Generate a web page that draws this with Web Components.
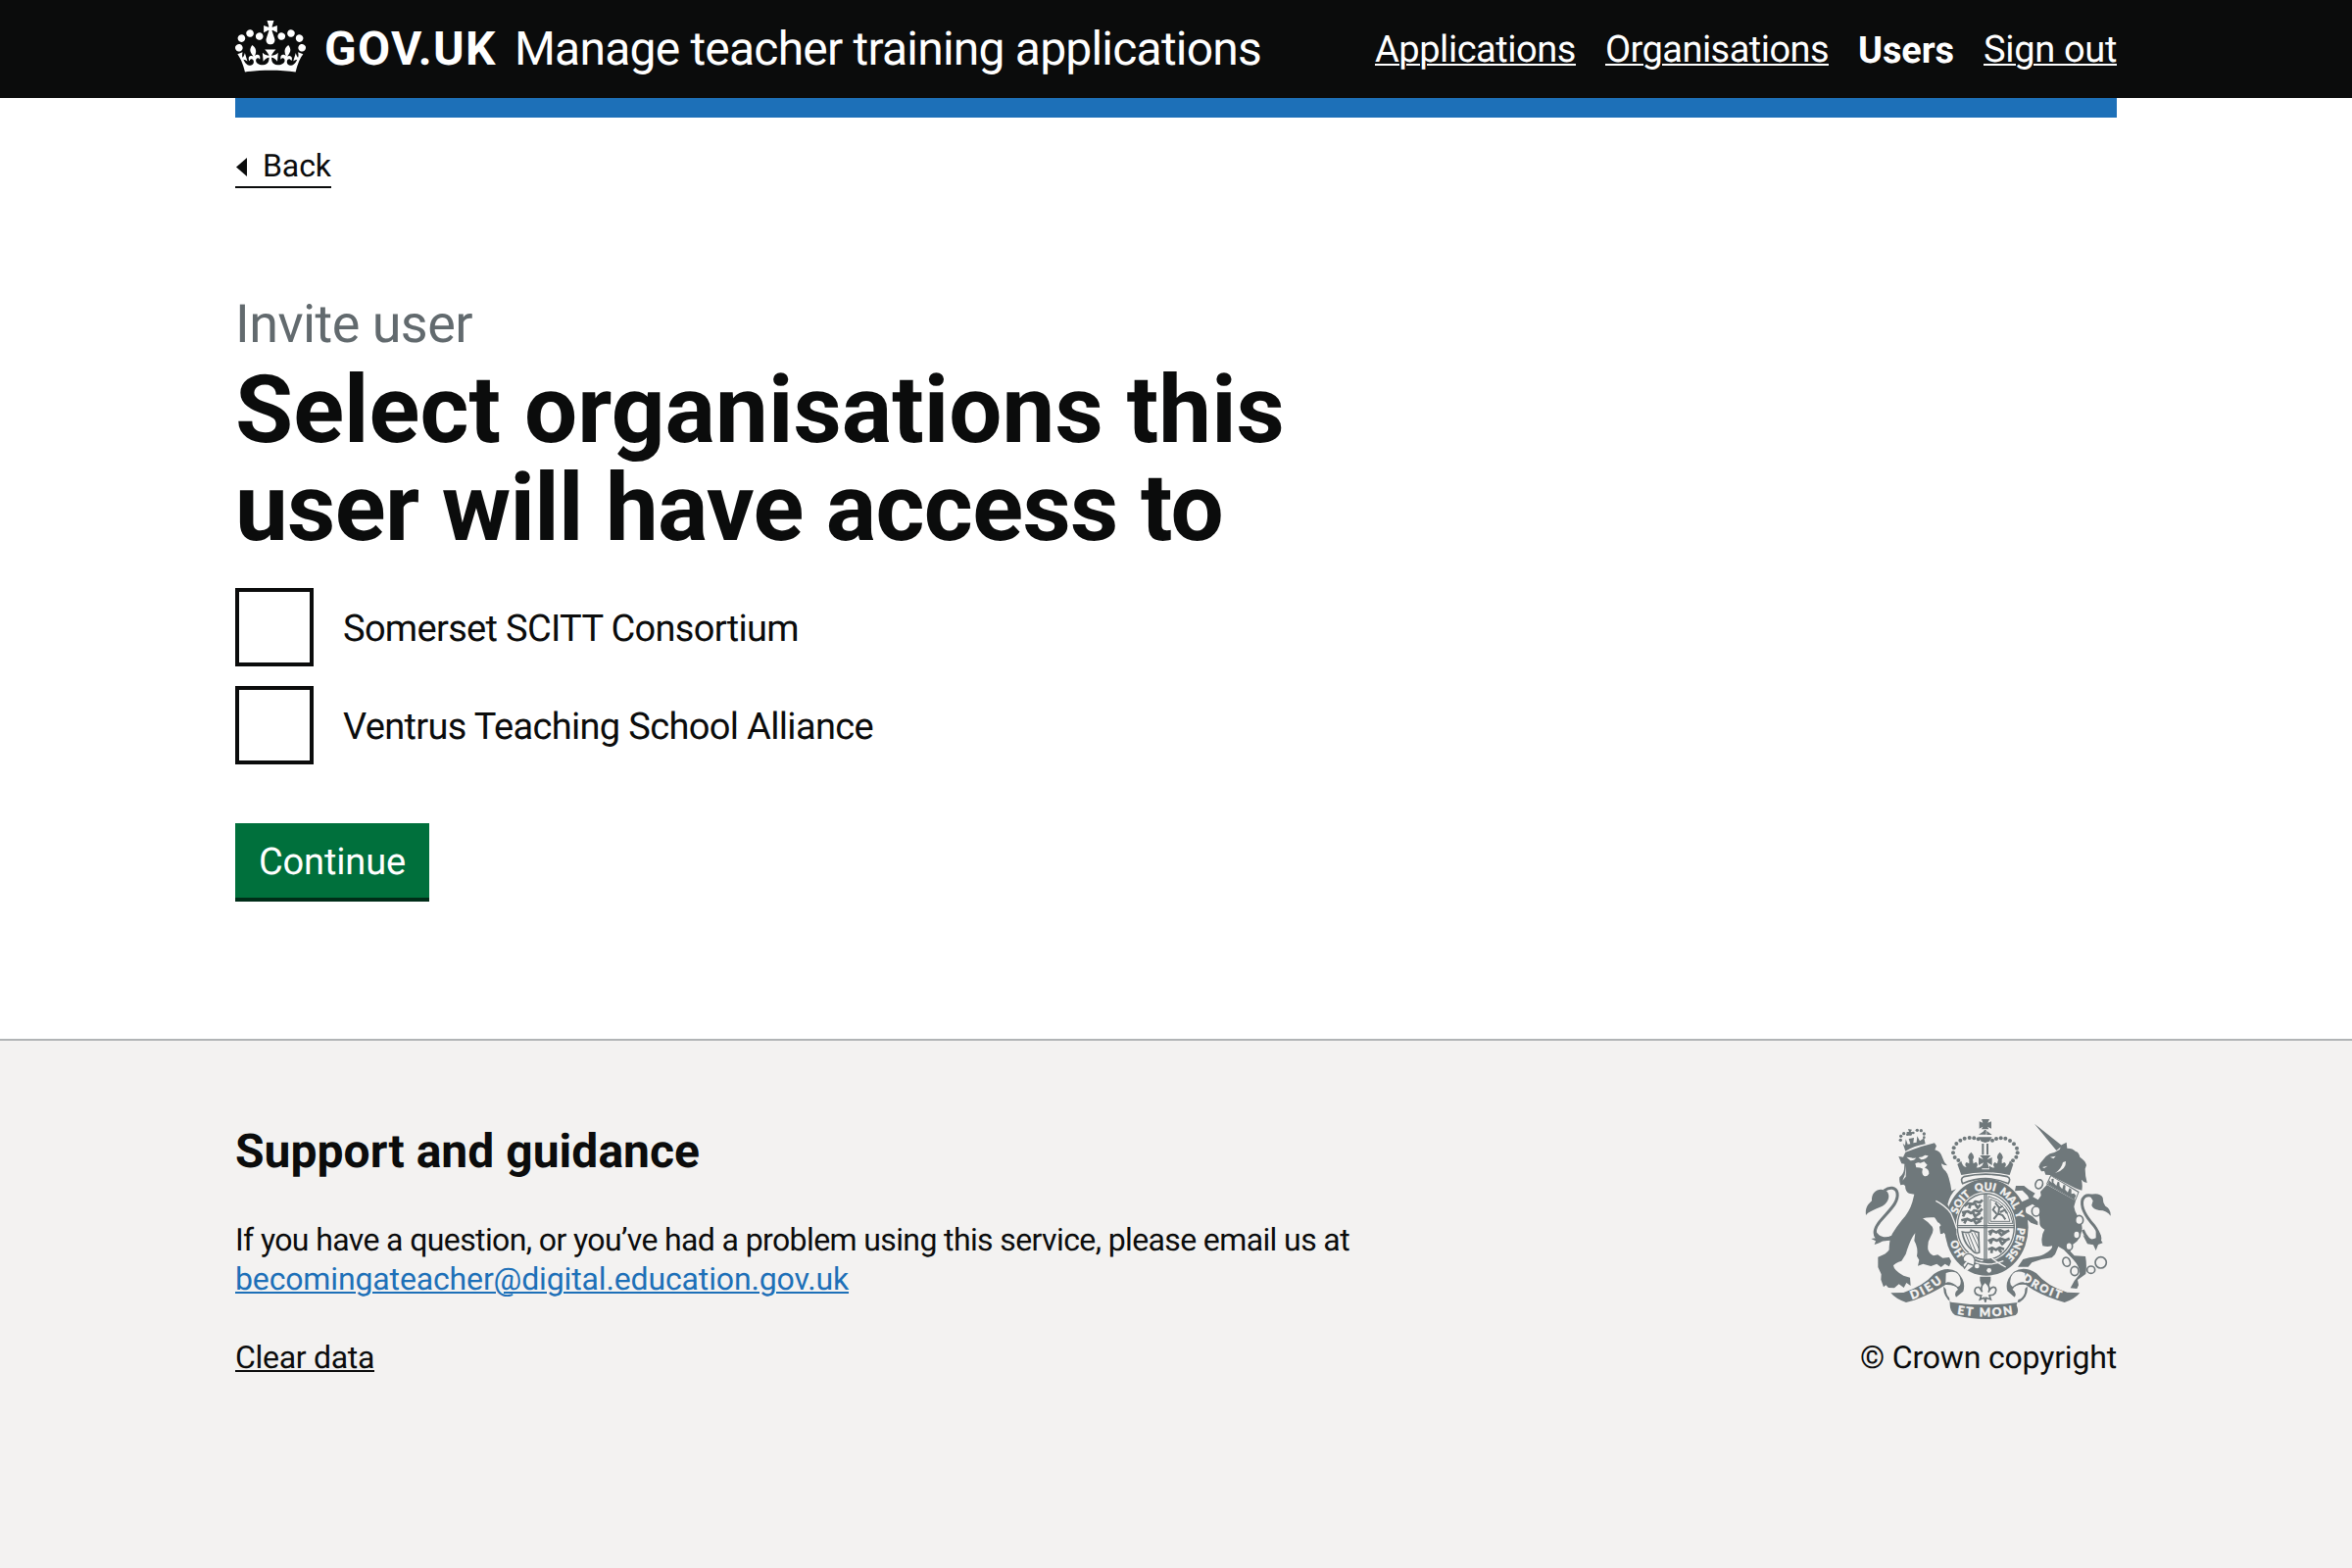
<!DOCTYPE html>
<html lang="en">
<head>
<meta charset="utf-8">
<title>Select organisations this user will have access to</title>
<style>
html,body{margin:0;padding:0}
body{background:#fff;color:#0b0c0c;font-family:Roboto,"Liberation Sans",sans-serif}
</style>
</head>
<body>
<manage-page></manage-page>
<script>
const define=(name,html,ready)=>customElements.define(name,class extends HTMLElement{
  connectedCallback(){
    if(this.shadowRoot)return;
    const t=document.createElement('template');
    t.innerHTML=html;
    this.attachShadow({mode:'open'}).append(t.content.cloneNode(true));
    if(ready)ready(this,this.shadowRoot);
  }
});

/* A single line of type tracked out to a set measure. */
define('fit-text',`<style>
:host{display:inline-block;white-space:nowrap;font-kerning:normal;text-rendering:geometricPrecision}
span{display:inline-block}
:host([underline]) span{text-decoration:underline;text-decoration-thickness:2px;text-underline-offset:2px}
</style><span><slot></slot></span>`,(el,root)=>{
  const s=root.querySelector('span');
  const w=+el.getAttribute('measure');
  const n=el.textContent.length;
  const natural=s.getBoundingClientRect().width;
  s.style.letterSpacing=((w-natural)/n).toFixed(3)+'px';
  el.style.width=w+'px';
});

define('crown-mark',`<style>:host{display:block;width:72px;height:53px}svg{display:block}</style>
<svg width="72" height="53" viewBox="0 0 132 97" fill="#fff"><path d="M25 30.2c3.5 1.5 7.7-.2 9.1-3.7 1.5-3.6-.2-7.8-3.9-9.2-3.6-1.4-7.6.3-9.1 3.9-1.4 3.5.3 7.5 3.9 9zM9 39.5c3.6 1.5 7.8-.2 9.2-3.7 1.5-3.6-.2-7.8-3.9-9.1-3.6-1.5-7.6.2-9.1 3.8-1.4 3.5.3 7.5 3.8 9zM4.4 57.2c3.5 1.5 7.7-.2 9.1-3.8 1.5-3.6-.2-7.7-3.9-9.1-3.5-1.5-7.6.3-9.1 3.8-1.4 3.5.3 7.6 3.9 9.1zm38.3-21.4c3.5 1.5 7.7-.2 9.1-3.8 1.5-3.6-.2-7.7-3.9-9.1-3.6-1.5-7.6.3-9.1 3.8-1.3 3.6.4 7.7 3.9 9.1zm64.4-5.6c-3.6 1.5-7.8-.2-9.1-3.7-1.5-3.6.2-7.8 3.8-9.2 3.6-1.4 7.7.3 9.2 3.9 1.3 3.5-.4 7.5-3.9 9zm15.9 9.3c-3.6 1.5-7.7-.2-9.1-3.7-1.5-3.6.2-7.8 3.7-9.1 3.6-1.5 7.7.2 9.2 3.8 1.5 3.5-.3 7.5-3.8 9zm4.7 17.7c-3.6 1.5-7.8-.2-9.2-3.8-1.5-3.6.2-7.7 3.9-9.1 3.6-1.5 7.7.3 9.2 3.8 1.3 3.5-.4 7.6-3.9 9.1zM89.3 35.8c-3.6 1.5-7.8-.2-9.2-3.8-1.4-3.6.2-7.7 3.9-9.1 3.6-1.5 7.7.3 9.2 3.8 1.4 3.6-.3 7.7-3.9 9.1zM69.7 17.7l8.9 4.7V9.3l-8.9 2.8c-.2-.3-.5-.6-.9-.9L72.4 0H59.6l3.5 11.2c-.3.3-.6.5-.9.9l-8.8-2.8v13.1l8.8-4.7c.3.3.6.7.9.9l-5 15.4v.1c-.2.8-.4 1.6-.4 2.4 0 4.1 3.1 7.5 7 8.1h.2c.3 0 .7.1 1 .1.4 0 .7 0 1-.1h.2c4-.6 7.1-4.1 7.1-8.1 0-.8-.1-1.7-.4-2.4V34l-5.1-15.4c.4-.2.7-.6 1-.9zM66 92.8c16.9 0 32.8 1.1 47.1 3.2 4-16.9 8.9-26.7 14-33.5l-9.6-3.4c1 4.9 1.1 7.2 0 10.2-1.5-1.4-3-4.3-4.2-8.7L108.6 76c2.8-2 5-3.2 7.5-3.3-4.4 9.4-10 11.9-13.6 11.2-4.3-.8-6.3-4.6-5.6-7.9 1-4.7 5.7-5.9 8-.5 4.3-8.7-3-11.4-7.6-8.8 7.1-7.2 7.9-13.5 2.1-21.1-8 6.1-8.1 12.3-4.5 20.8-4.7-5.4-12.1-2.5-9.5 6.2 3.4-5.2 7.9-2 7.2 3.1-.6 4.3-6.4 7.8-13.5 7.2-10.3-.9-10.9-8-11.2-13.8 2.5-.5 7.1 1.8 11 7.3L80.2 60c-4.1 4.4-8 5.3-12.3 5.4 1.4-4.4 8-11.6 8-11.6H55.5s6.4 7.2 7.9 11.6c-4.2-.1-8-1-12.3-5.4l1.4 16.4c3.9-5.5 8.5-7.7 10.9-7.3-.3 5.8-.9 12.8-11.1 13.8-7.2.6-12.9-2.9-13.5-7.2-.7-5 3.8-8.3 7.1-3.1 2.7-8.7-4.6-11.6-9.4-6.2 3.7-8.5 3.6-14.7-4.6-20.8-5.8 7.6-5 13.9 2.2 21.1-4.7-2.6-11.9.1-7.7 8.8 2.3-5.5 7.1-4.2 8.1.5.7 3.3-1.3 7.1-5.7 7.9-3.5.7-9-1.8-13.5-11.2 2.5.1 4.7 1.3 7.5 3.3l-4.7-15.4c-1.2 4.4-2.7 7.2-4.3 8.7-1.1-3-.9-5.3 0-10.2l-9.5 3.4c5 6.9 9.9 16.7 14 33.5 14.8-2.1 30.8-3.2 47.7-3.2z"/></svg>`);

define('page-header',`<style>
:host{display:block;background:#0b0c0c;color:#fff}
.bar{width:1920px;height:100px;margin:0 auto;display:flex;align-items:flex-start;justify-content:space-between}
.brand{display:flex;align-items:flex-start;font-size:48px;line-height:60px}
crown-mark{margin-top:21px;margin-right:19px}
.brand fit-text{margin-top:20px}
.logo{font-weight:700;margin-right:18px}
nav{display:flex;gap:30px;font-size:38px;line-height:50px;margin-top:26px}
b{font-weight:700}
.stripe{background:#fff}
.stripe div{width:1920px;height:20px;margin:0 auto;background:#1d70b8}
</style>
<div class="bar"><div class="brand"><crown-mark></crown-mark><fit-text class="logo" measure="176">GOV.UK</fit-text><fit-text measure="762">Manage teacher training applications</fit-text></div>
<nav><fit-text underline measure="205">Applications</fit-text><fit-text underline measure="228">Organisations</fit-text><b><fit-text measure="98">Users</fit-text></b><fit-text underline measure="136">Sign out</fit-text></nav></div>
<div class="stripe"><div></div></div>`);

define('back-link',`<style>
:host{display:flex;width:98px;height:40px;border-bottom:2px solid #0b0c0c;font-size:32px;line-height:38px}
svg{display:block;margin:11px 16px 0 0}
</style><svg width="12" height="19" viewBox="0 0 12 19"><path d="M12 0V19L1 9.5Z" fill="#0b0c0c"/></svg><fit-text measure="70"><slot></slot></fit-text>`,
(el,root)=>{
  const f=root.querySelector('fit-text');
  f.textContent=el.textContent;
  f.replaceWith(f.cloneNode(true));
});

define('check-option',`<style>
:host{display:flex;height:80px;align-items:flex-start;font-size:38px;line-height:50px}
i{box-sizing:border-box;width:80px;height:80px;border:4px solid #0b0c0c;margin-right:30px}
div{margin-top:16px}
</style><i></i><div><slot></slot></div>`);

define('submit-button',`<style>
:host{display:block;box-sizing:border-box;width:198px;height:80px;padding:14px 24px 0;background:#00703c;border-bottom:4px solid #002d18;color:#fff;font-size:38px;line-height:50px}
</style><slot></slot>`);

define('royal-crest',`<style>:host{display:block;width:250px;height:204px}svg{display:block;overflow:visible}
.g{fill:#6f787b}.l{fill:#f3f2f1}.s{fill:none;stroke:#6f787b}.ls{fill:none;stroke:#f3f2f1}
text{font-family:Lato,"Liberation Sans",sans-serif;font-weight:900;fill:#f3f2f1;stroke:#f3f2f1;stroke-width:1.2px}</style>
<svg width="250" height="204" viewBox="42 36 750 612">
<defs>
<path id="ga" pathLength="360" d="M411 481A95 114 0 0 1 411 253A95 114 0 0 1 411 481"/>
<path id="di" d="M183 588 Q238 570 288 524"/>
<path id="em" d="M321 632 Q409 648 497 632"/>
<path id="dr" d="M519 527 Q572 568 650 591"/>
</defs>
<!-- lion's tail -->
<path class="s" stroke-width="9" d="M122 397C78 420 53 390 84 350C112 316 143 292 138 262C134 244 115 242 98 255"/>
<path class="g" d="M107 258C88 243 58 253 60 286C45 300 40 309 42 330C56 311 94 309 105 291C115 278 113 266 107 258ZM70 372C64 387 66 396 72 400L58 402L72 409L68 420Q88 414 94 408L118 407L120 394C98 400 80 398 70 372Z"/>
<!-- lion's crown -->
<g class="g"><circle cx="148" cy="100" r="5"/><circle cx="149" cy="88" r="5"/><circle cx="158" cy="80" r="5"/><circle cx="169" cy="83" r="4"/><circle cx="187" cy="78" r="4"/><circle cx="199" cy="70" r="5"/><circle cx="211" cy="71" r="5"/><circle cx="220" cy="81" r="5"/><circle cx="220" cy="92" r="4"/>
<path d="M171 66L183 68L179 75L187 76L181 86L172 86L166 75L174 75ZM155 110L162 117L164 97L170 113L178 112L173 96L189 93L187 109L197 107L199 88L207 103L220 94L224 112Q190 118 163 134Z"/></g>
<!-- lion -->
<path class="g" d="M142 150L156 152L163 137Q205 120 252 109L258 118L253 130Q270 133 277 155Q281 169 291 178Q280 178 273 172Q275 188 286 195Q293 203 296 217Q302 238 304 256L318 250Q299 267 292 297Q303 315 305 340L314 372L315 386L303 392L298 382L290 396L282 383L273 388L270 374L278 365L268 357L268 346L254 337Q230 335 216 340Q232 350 245 365Q252 378 240 396Q230 411 232 435Q237 449 249 454L262 451L277 461L297 459L303 471L297 487L284 479L272 489L259 479L241 486L217 479L201 485L205 467L198 455Q203 431 190 408L193 385Q178 402 164 449L151 470Q131 476 126 484Q128 500 157 515L177 521L179 546L166 537L158 552L143 541L129 553L111 552L103 544L96 550L88 527L89 511L79 489L79 458Q105 450 113 436Q113 404 123 386Q136 365 152 345Q175 320 184 290L190 266L174 263Q163 259 162 240L157 236L148 238Q143 226 145 214Q157 204 159 190L160 173L151 172Z"/>
<path class="l" d="M166 152L180 154Q189 157 196 154Q191 164 178 163ZM203 153Q214 153 223 146L233 148Q226 160 211 160ZM193 172Q202 166 209 170L220 166L230 176L222 185Q236 188 235 203Q228 214 219 209Q211 202 216 188Q206 183 196 184Z"/>
<path class="l" d="M165 178L161 206L154 224L164 212Z"/>
<!-- unicorn -->
<path class="g" d="M558 50L643 118L625 132ZM571 182Q574 170 583 162Q593 148 605 142Q622 138 635 129L641 115L656 107L658 125Q676 125 684 135Q694 137 697 152Q714 163 717 177L713 188Q713 211 719 231Q708 230 702 221Q706 240 703 254Q694 252 682 247L605 207L592 206L588 195L579 196ZM596 237L684 286L679 304Q681 320 690 332Q704 351 704 371Q700 395 688 410L671 423L668 441L680 454L714 456Q719 482 715 510L690 528L693 544L688 555L668 553L680 531L696 511Q699 490 676 465L648 436L631 426L621 450L611 460L580 465L550 475L539 488L507 488L523 465L542 460L567 456Q584 453 590 448Q615 434 612 424Q598 428 583 424Q575 395 589 374Q572 366 574 351L572 324L571 310L552 296L532 307L530 322L552 334L568 350L568 361L547 353L526 334L515 291L553 274L569 283L578 270L576 258ZM501 240L526 240L540 251L560 263L555 270L545 287L537 270L521 254L498 256Z"/>
<path class="l" d="M606 152L623 149L616 157ZM582 183L598 179L588 186ZM654 165Q656 191 621 201Q641 188 645 168Z"/>
<path class="g" d="M607 207L695 258L684 286L594 235Z"/><path class="l" d="M609 211L691 260L683 281L598 233Z"/>
<path class="g" d="M602 222L611 231L610 219L617 218L616 230L625 240L629 227L634 229L635 241L643 250L647 236L653 239L652 252L660 260L665 247L671 251L671 265L679 263L685 270L680 281L600 235Z"/>
<path class="s" stroke-width="9" d="M706 375Q724 418 751 410Q767 400 741 363Q696 313 705 282Q714 263 737 272"/>
<path class="g" d="M726 268Q757 259 767 276Q767 292 775 302Q792 310 791 332Q780 315 756 315Q737 312 733 300L737 286ZM746 378Q767 389 762 407L767 415L753 420L746 438L738 421L720 418L706 391Q729 410 746 400Z"/>
<g fill="#f3f2f1" stroke="#6f787b" stroke-width="5"><ellipse cx="572" cy="235" rx="11" ry="14" transform="rotate(18 572 235)"/><ellipse cx="563" cy="318" rx="13" ry="15"/><ellipse cx="695" cy="345" rx="12" ry="14"/><ellipse cx="687" cy="390" rx="10" ry="12"/><ellipse cx="664" cy="425" rx="10" ry="12"/><ellipse cx="656" cy="473" rx="11" ry="14" transform="rotate(-20 656 473)"/><ellipse cx="681" cy="501" rx="12" ry="14"/><ellipse cx="731" cy="497" rx="12" ry="11"/><circle cx="761" cy="475" r="17"/></g>
<!-- garter and shield -->
<ellipse class="g" cx="411" cy="367" rx="128" ry="148"/>
<ellipse class="l" cx="409" cy="365" rx="92" ry="107"/>
<ellipse class="s" stroke-width="4" cx="409" cy="365" rx="87" ry="101"/>
<path class="s" stroke-width="4" d="M405 264V467M411 264V467M320 362H498M320 368H498"/>
<path class="s" stroke-width="8" stroke-linejoin="round" d="M343 302L355 294L370 296L377 288L391 291L399 283M363 294L358 309M376 295L384 308L393 298M336 322L354 318L364 324L374 315L390 319L398 310M347 319L339 334M369 320L376 333L392 323M334 346L352 341L365 347L376 340L390 345L399 336M349 344L343 355M372 344L379 355L394 347"/>
<path class="s" stroke-width="3" d="M417 355V272Q481 288 492 355ZM423 349V281Q471 295 483 349Z"/>
<path class="s" stroke-width="6" d="M433 342L447 325L460 330L469 343M442 326L431 313L438 302M448 324L450 307L438 292M453 321L467 314L474 325M450 308L461 302"/>
<path class="s" stroke-width="5" d="M337 381Q364 387 364 376L387 383L389 444Q376 450 366 436Q343 418 337 381Z"/>
<path class="s" stroke-width="3" d="M347 386L367 437M356 386L378 441M365 383L387 431M374 382L389 412"/>
<path class="s" stroke-width="8" stroke-linejoin="round" d="M417 382L429 377L441 383L452 376L466 382L481 377M427 380L421 391M449 382L457 391L474 380M416 409L431 403L443 408L454 401L469 407L482 401M428 406L423 418M452 407L459 419L471 407M416 435L429 430L440 436L451 429L465 434M428 434L426 446M449 435L457 444"/>
<path class="g" d="M404 466L394 477L429 477L438 465L411 465Z"/>
<path class="ls" stroke-width="4" d="M367 470Q415 490 463 470M426 460Q439 472 470 489"/>
<g font-size="32" text-anchor="middle"><text><textPath href="#ga" startOffset="56">HO</textPath></text><text><textPath href="#ga" startOffset="132">SOIT</textPath></text><text><textPath href="#ga" startOffset="178">QUI</textPath></text><text><textPath href="#ga" startOffset="221">MAL</textPath></text><text><textPath href="#ga" startOffset="250">Y</textPath></text><text><textPath href="#ga" startOffset="298">PENSE</textPath></text></g>
<path class="l" d="M334 447L361 445L376 458L373 484L353 499L335 491L346 475Z"/><path class="s" stroke-width="4" d="M337 468Q343 444 362 449Q381 459 373 484L354 477L344 492L335 479L349 471"/>
<circle class="l" cx="382" cy="486" r="7"/><circle class="l" cx="419" cy="499" r="7"/>
<!-- lion's forepaw laps over the garter -->
<path class="g" d="M261 290L289 303Q305 326 307 349L319 372L319 386L305 396L299 382L291 399L281 383L270 388L267 366L274 358L262 352L248 330Z"/>
<path class="ls" stroke-width="4" d="M256 286Q285 300 302 324Q312 346 320 372"/>
<!-- imperial crown -->
<path class="g" d="M396 36H420L415 47L426 43V65L414 59L418 67H396L400 59L389 65V43L400 47ZM405 69H410V83H387L401 74ZM412 72L428 84H412ZM387 91H428L420 104L407 108L395 104ZM397 111H403V145H397ZM411 111H417V145H411ZM391 147H424L413 160L428 153V177L413 168L420 187H394L402 169L387 177V153L402 160ZM334 164Q337 181 350 183Q342 174 350 168L358 172L358 160Q349 149 364 137Q378 150 369 160L371 172L379 167Q388 174 380 184Q393 186 397 178V190H420V178Q424 186 436 184Q428 176 436 168L444 172L447 160Q438 150 452 137Q467 150 458 160L458 172L466 168Q475 174 466 184Q478 181 483 163L493 174L482 207Q408 190 334 207L322 174Z"/>
<g class="g"><circle cx="386" cy="97" r="6"/><circle cx="373" cy="94" r="6"/><circle cx="359" cy="93" r="6"/><circle cx="344" cy="95" r="6"/><circle cx="331" cy="101" r="6"/><circle cx="319" cy="111" r="6"/><circle cx="311" cy="124" r="6"/><circle cx="309" cy="139" r="6"/><circle cx="314" cy="153" r="6"/><circle cx="325" cy="162" r="6"/><circle cx="429" cy="101" r="6"/><circle cx="441" cy="96" r="6"/><circle cx="455" cy="94" r="6"/><circle cx="469" cy="95" r="6"/><circle cx="483" cy="102" r="6"/><circle cx="495" cy="112" r="6"/><circle cx="504" cy="125" r="6"/><circle cx="506" cy="139" r="6"/><circle cx="502" cy="152" r="6"/><circle cx="492" cy="163" r="6"/></g>
<path d="M338 233Q330 217 342 212Q409 197 475 212Q487 217 478 233Q409 203 338 233Z" fill="#f3f2f1" stroke="#6f787b" stroke-width="5"/>
<!-- ribbon and fleur-de-lis -->
<path class="g" d="M118 568L157 567Q218 547 250 510Q289 484 321 503Q350 531 340 563L318 581Q310 567 324 557Q316 542 286 543Q245 570 190 590L165 597Q134 587 118 568ZM697 568L658 566Q597 548 564 508Q527 484 495 503Q466 530 475 562L497 581Q506 569 491 557Q500 540 531 543Q570 572 628 590L650 597Q680 588 697 568ZM280 548Q277 576 302 596Q406 612 513 596Q540 578 536 548L516 566L503 605Q513 628 500 636Q411 660 315 636Q298 624 299 600L296 567Z"/>
<path class="l" d="M287 507Q327 493 332 531Q333 546 323 549Q308 535 292 535L286 538ZM529 507Q489 492 484 530Q482 545 491 549Q507 535 523 535L531 538ZM287 551Q304 541 321 552L310 566L311 581L330 582Q316 593 300 586Q286 574 287 551ZM529 551Q514 541 495 552L505 566V581L487 582Q499 593 516 586Q531 574 529 551Z"/>
<g font-size="36"><text><textPath href="#di" textLength="108">DIEU</textPath></text><text><textPath href="#em" textLength="172">ET MON</textPath></text><text font-size="34"><textPath href="#dr" textLength="132">DROIT</textPath></text></g>
<path class="g" d="M391 518H424V530L418 550H397L391 530Z"/>
<path d="M407 534Q426 550 417 566Q426 545 438 552Q445 564 431 574L420 576L424 588L410 583L408 596L404 583L391 588L395 576Q376 575 375 562Q376 548 389 551L398 565Q390 549 407 534Z" fill="#f3f2f1" stroke="#6f787b" stroke-width="5"/>
</svg>`);

define('page-footer',`<style>
:host{display:block;box-sizing:border-box;height:540px;background:#f3f2f1;border-top:2px solid #b1b4b6}
.in{width:1920px;margin:0 auto;display:flex;justify-content:space-between;align-items:flex-start;font-size:32px;line-height:40px}
.left{display:flex;flex-direction:column;align-items:flex-start;padding-top:83px}
h2{margin:0;font-size:48px;line-height:60px;font-weight:700}
p{margin:40px 0 0;display:flex;flex-direction:column;align-items:flex-start}
.link{color:#1d70b8}
.right{display:flex;flex-direction:column;align-items:center;padding-top:80px}
.right fit-text{margin-top:19px}
</style><div class="in"><div class="left"><h2><fit-text measure="474">Support and guidance</fit-text></h2>
<p><fit-text measure="1137">If you have a question, or you’ve had a problem using this service, please email us at</fit-text><fit-text class="link" underline measure="626">becomingateacher@digital.education.gov.uk</fit-text></p>
<p><fit-text underline measure="142">Clear data</fit-text></p></div>
<div class="right"><royal-crest></royal-crest><fit-text measure="262">© Crown copyright</fit-text></div></div>`);

define('manage-page',`<style>
:host{display:flex;flex-direction:column;height:1600px}
main{width:1920px;margin:0 auto;flex:1}
back-link{margin-top:30px}
.caption{color:#626a6e;font-size:54px;line-height:60px;margin-top:110px;display:flex}
h1{margin:7px 0 31px;font-size:96px;line-height:100px;font-weight:700;display:flex;flex-direction:column;align-items:flex-start}
check-option{margin-bottom:20px}
submit-button{margin-top:60px}
</style>
<page-header></page-header>
<main><back-link>Back</back-link>
<div class="caption"><fit-text measure="242">Invite user</fit-text></div>
<h1><fit-text measure="1071">Select organisations this</fit-text><fit-text measure="1008">user will have access to</fit-text></h1>
<check-option><fit-text measure="465">Somerset SCITT Consortium</fit-text></check-option>
<check-option><fit-text measure="541">Ventrus Teaching School Alliance</fit-text></check-option>
<submit-button><fit-text measure="150">Continue</fit-text></submit-button></main>
<page-footer></page-footer>`);
</script>
</body>
</html>
